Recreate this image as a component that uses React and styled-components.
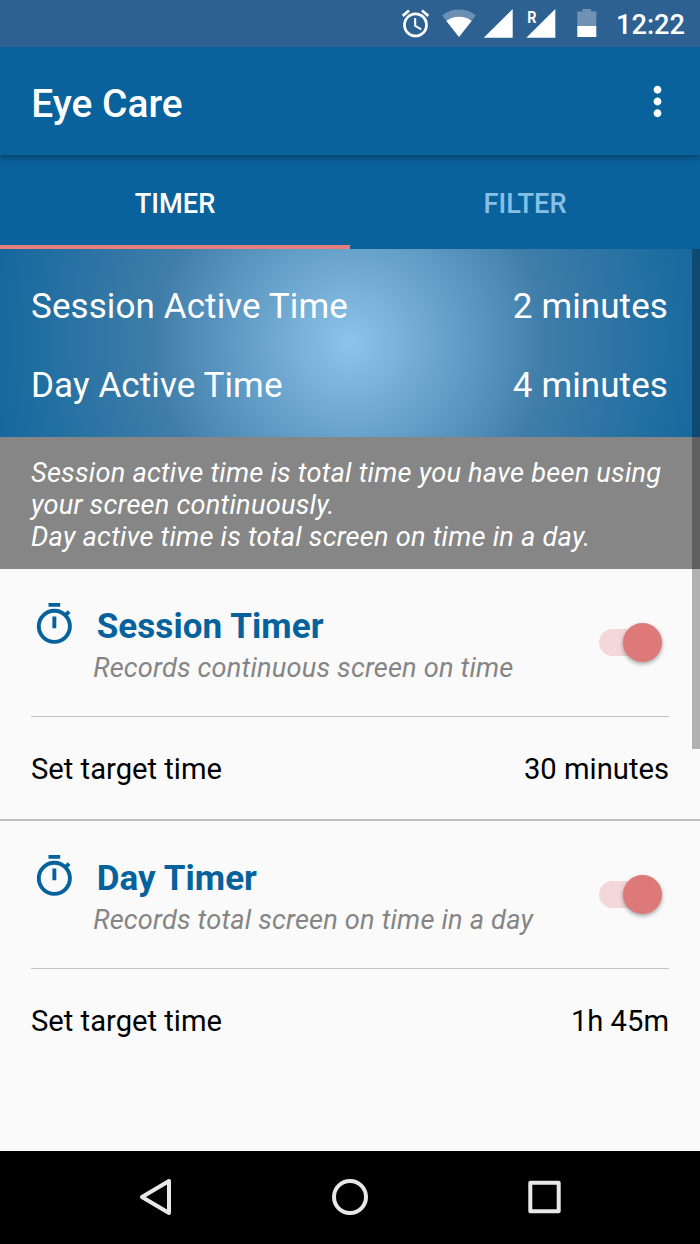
import { MdMoreVert, MdOutlineAlarm } from "react-icons/md";
import styled, { createGlobalStyle } from "styled-components";

const GlobalStyle = createGlobalStyle`
 * { box-sizing: border-box; }
 body {
  margin: 0;
  background-color: #000;
  font-family: Roboto, "Liberation Sans", sans-serif;
 }
`;

const Screen = styled.div`
 width: 700px;
 height: 1244px;
 display: flex;
 flex-direction: column;
 background-color: #fafafa;
 overflow: hidden;
 svg {
  display: block;
  flex-shrink: 0;
 }
`;

const StatusBar = styled.div`
 height: 47px;
 flex-shrink: 0;
 display: flex;
 justify-content: flex-end;
 padding-right: 16px;
 background-color: #2d6192;
 color: #fff;
 z-index: 2;
`;

const AlarmIcon = styled(MdOutlineAlarm)`
 width: 33px;
 height: 33px;
 margin: 7px 9px 0 0;
`;

const Clock = styled.div`
 width: 68px;
 margin-left: 19px;
 font-size: 27.2px;
 font-weight: 500;
 line-height: 50px;
 text-align: right;
 white-space: nowrap;
`;

const Toolbar = styled.header`
 height: 108px;
 flex-shrink: 0;
 display: flex;
 align-items: center;
 justify-content: space-between;
 padding: 4px 19.5px 0 31.3px;
 background-color: #09629b;
 color: #fff;
 box-shadow: 0 2px 7px rgba(0, 0, 0, 0.4);
 z-index: 1;
`;

const Title = styled.h1`
 margin: 0;
 font-size: 38.9px;
 font-weight: 500;
`;

const MenuIcon = styled(MdMoreVert)`
 width: 47px;
 height: 47px;
 margin-top: -4px;
`;

const Tabs = styled.nav`
 height: 94px;
 flex-shrink: 0;
 display: flex;
 background-color: #09629b;
`;

const Tab = styled.div`
 flex: 1;
 display: flex;
 align-items: center;
 justify-content: center;
 padding-top: 7px;
 border-bottom: 4px solid ${props => props.$active ? "#e57f7d" : "transparent"};
 color: ${props => props.$active ? "#fff" : "#86c0e6"};
 font-size: 27.2px;
 font-weight: 500;
`;

const Content = styled.main`
 position: relative;
 flex: 1;
`;

const ScrollThumb = styled.div`
 position: absolute;
 top: 0;
 right: 0;
 width: 8px;
 height: 500px;
 background-color: rgba(0, 0, 0, 0.29);
`;

const Summary = styled.section`
 height: 188px;
 padding: 18px 32px 0 31px;
 background: radial-gradient(circle at center, #8cc4ea 0, #3f7da9 197px, #09629b 405px);
 color: #fff;
`;

const SummaryRow = styled.div`
 height: 79px;
 display: flex;
 align-items: center;
 justify-content: space-between;
 font-size: 35px;
 letter-spacing: 0.1px;
`;

const Note = styled.p`
 height: 132.4px;
 margin: 0;
 padding: 20px 31px 0;
 background-color: #868686;
 color: #fff;
 font-size: 27.2px;
 font-style: italic;
 letter-spacing: 0.23px;
 line-height: 32px;
`;

const Card = styled.section`
 height: 251.7px;
 padding: 0 31px;
 border-bottom: ${props => props.$last ? "none" : "2px solid #bdbdbd"};
`;

const CardHead = styled.div`
 height: 147.5px;
 display: flex;
 align-items: flex-start;
 border-bottom: 1px solid #c2c2c2;
`;

const TimerIcon = styled.svg`
 width: 46.7px;
 height: 46.7px;
 margin-top: 31.7px;
`;

const CardText = styled.div`
 flex: 1;
 padding: 37px 0 0 15.5px;
`;

const CardTitle = styled.h2`
 margin: 0 0 0 3.5px;
 color: #05629c;
 font-size: 35px;
 font-weight: 700;
 letter-spacing: 0.08px;
 line-height: 41px;
`;

const CardHint = styled.div`
 margin-top: 5px;
 color: #858585;
 font-size: 27.2px;
 font-style: italic;
 letter-spacing: 0.19px;
 line-height: 32px;
`;

const Switch = styled.div`
 width: 62px;
 height: 27px;
 margin: 59.5px 8px 0 0;
 display: flex;
 align-items: center;
 justify-content: flex-end;
 border-radius: 14px;
 background-color: #f4d8d9;
`;

const Knob = styled.div`
 width: 39px;
 height: 39px;
 flex-shrink: 0;
 margin-right: -1px;
 border-radius: 50%;
 background-color: #dd7979;
 box-shadow: 0 2px 4px rgba(0, 0, 0, 0.35);
`;

const TargetRow = styled.div`
 height: 105px;
 display: flex;
 align-items: center;
 justify-content: space-between;
 color: #000;
 font-size: 29.2px;
`;

const NavBar = styled.footer`
 height: 93.5px;
 flex-shrink: 0;
 display: flex;
 justify-content: center;
 background-color: #000;
`;

const NavButton = styled.div`
 width: 194.5px;
 display: flex;
 align-items: center;
 justify-content: center;
`;

const timers = [
    {title: "Session Timer", hint: "Records continuous screen on time", target: "30 minutes"},
    {title: "Day Timer", hint: "Records total screen on time in a day", target: "1h 45m"},
];

// wifi, both sim signals and the battery
function StatusIcons() {
    return (
        <svg width="156" height="47" viewBox="441 0 156 47" fill="#fff">
            <path d="M459 37L442.2 15.4C447 11.4 452.8 9.5 459 9.5s12 1.9 16.8 5.9z" opacity=".3" />
            <path d="M459 37L446.4 21C450 18 454.3 16.8 459 16.8s9 1.2 12.6 4.2z" />
            <path d="M483.7 37.8L512.7 9v28.8z" />
            <path d="M526.3 37.8L555.3 9v28.8z" />
            <text x="527.2" y="23" fontSize="17" fontWeight="700" textLength="9.2" lengthAdjust="spacingAndGlyphs">R</text>
            <path d="M577.3 11.5h5.2V9h8.6v2.5h5.2V26h-19z" opacity=".32" />
            <path d="M577.3 26h19v11h-19z" />
        </svg>
    );
}

function TimerCard({title, hint, target, last}) {
    return (
        <Card $last={last}>
            <CardHead>
                <TimerIcon viewBox="0 0 24 24" fill="none" stroke="#05629c">
                    <circle cx="12" cy="13" r="8" strokeWidth="2" />
                    <path d="M9 2h6M12 8v6" strokeWidth="2" />
                    <path d="M17.6 7.4l2-2" strokeWidth="2" />
                </TimerIcon>
                <CardText>
                    <CardTitle>{title}</CardTitle>
                    <CardHint>{hint}</CardHint>
                </CardText>
                <Switch>
                    <Knob />
                </Switch>
            </CardHead>
            <TargetRow>
                <span>Set target time</span>
                <span>{target}</span>
            </TargetRow>
        </Card>
    );
}

export default function App() {
    return (
        <Screen>
            <GlobalStyle />
            <StatusBar>
                <AlarmIcon />
                <StatusIcons />
                <Clock>12:22</Clock>
            </StatusBar>

            <Toolbar>
                <Title>Eye Care</Title>
                <MenuIcon />
            </Toolbar>

            <Tabs>
                <Tab $active>TIMER</Tab>
                <Tab>FILTER</Tab>
            </Tabs>

            <Content>
                <Summary>
                    <SummaryRow>
                        <span>Session Active Time</span>
                        <span>2 minutes</span>
                    </SummaryRow>
                    <SummaryRow>
                        <span>Day Active Time</span>
                        <span>4 minutes</span>
                    </SummaryRow>
                </Summary>
                <Note>
                    Session active time is total time you have been using your screen continuously.
                    <br />
                    Day active time is total screen on time in a day.
                </Note>
                {timers.map((timer, index) => (
                    <TimerCard key={timer.title} {...timer} last={index === timers.length - 1} />
                ))}
                <ScrollThumb />
            </Content>

            <NavBar>
                <NavButton>
                    <svg width="40" height="40" fill="none" stroke="#e8e8e8" strokeWidth="4" strokeLinejoin="round">
                        <path d="M6 20L33 4v32z" />
                    </svg>
                </NavButton>
                <NavButton>
                    <svg width="40" height="40" fill="none" stroke="#e8e8e8" strokeWidth="4">
                        <circle cx="20" cy="20" r="16" />
                    </svg>
                </NavButton>
                <NavButton>
                    <svg width="40" height="40" fill="none" stroke="#e8e8e8" strokeWidth="4" strokeLinejoin="round">
                        <path d="M5.3 5.8h28.4v28.4H5.3z" />
                    </svg>
                </NavButton>
            </NavBar>
        </Screen>
    );
}
